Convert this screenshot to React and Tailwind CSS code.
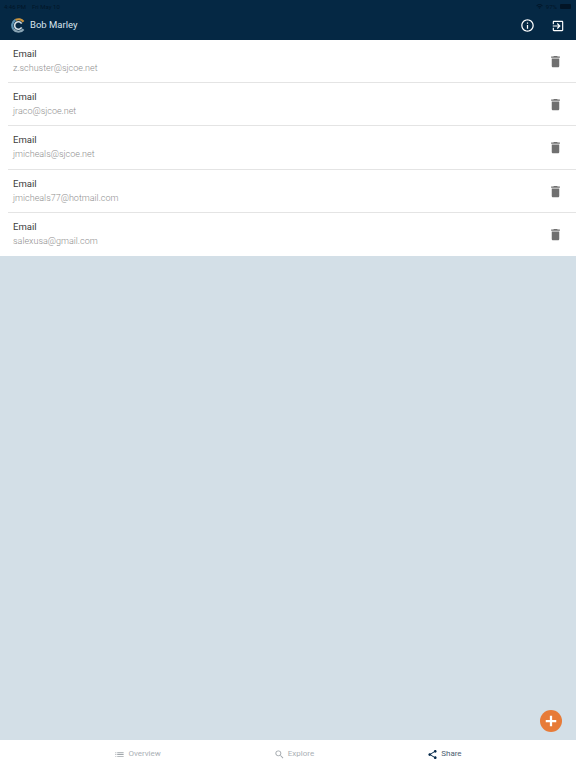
const EMAILS = [
  'z.schuster@sjcoe.net',
  'jraco@sjcoe.net',
  'jmicheals@sjcoe.net',
  'jmicheals77@hotmail.com',
  'salexusa@gmail.com',
];

// Material style glyphs, same set the app uses
const ICONS = {
  trash: 'M6 19c0 1.1.9 2 2 2h8c1.1 0 2-.9 2-2V7H6v12zM19 4h-3.5l-1-1h-5l-1 1H5v2h14V4z',
  info: 'M11 7h2v2h-2zm0 4h2v6h-2zm1-9C6.48 2 2 6.48 2 12s4.48 10 10 10 10-4.48 10-10S17.52 2 12 2zm0 18c-4.41 0-8-3.59-8-8s3.59-8 8-8 8 3.59 8 8-3.59 8-8 8z',
  exit: 'M10.09 15.59L11.5 17l5-5-5-5-1.41 1.41L12.67 11H3v2h9.67l-2.58 2.59zM19 3H5c-1.11 0-2 .9-2 2v4h2V5h14v14H5v-4H3v4c0 1.1.89 2 2 2h14c1.1 0 2-.9 2-2V5c0-1.1-.9-2-2-2z',
  list: 'M3 13h2v-2H3v2zm0 4h2v-2H3v2zm0-8h2V7H3v2zm4 4h14v-2H7v2zm0 4h14v-2H7v2zM7 7v2h14V7H7z',
  search: 'M15.5 14h-.79l-.28-.27C15.41 12.59 16 11.11 16 9.5 16 5.91 13.09 3 9.5 3S3 5.91 3 9.5 5.91 16 9.5 16c1.61 0 3.09-.59 4.23-1.57l.27.28v.79l5 4.99L20.49 19l-4.99-5zm-6 0C7.01 14 5 11.99 5 9.5S7.01 5 9.5 5 14 7.01 14 9.5 11.99 14 9.5 14z',
  share: 'M18 16.08c-.76 0-1.44.3-1.96.77L8.91 12.7c.05-.23.09-.46.09-.7s-.04-.47-.09-.7l7.05-4.11c.54.5 1.25.81 2.04.81 1.66 0 3-1.34 3-3s-1.34-3-3-3-3 1.34-3 3c0 .24.04.47.09.7L8.04 9.81C7.5 9.31 6.79 9 6 9c-1.66 0-3 1.34-3 3s1.34 3 3 3c.79 0 1.5-.31 2.04-.81l7.12 4.16c-.05.21-.08.43-.08.65 0 1.61 1.31 2.92 2.92 2.92s2.92-1.31 2.92-2.92-1.31-2.92-2.92-2.92z',
  plus: 'M19 13.5h-5.500V19h-3v-5.500H5v-3h5.500V5h3v5.500H19v3z',
  wifi: 'M1 9l2 2c5-5 13-5 18 0l2-2C17 3 7 3 1 9zm8 8l3 3 3-3c-1.6-1.6-4.4-1.6-6 0zm-4-4l2 2c2.8-2.8 7.2-2.8 10 0l2-2c-3.9-3.9-10.100-3.900-14 0z',
};

function Icon({ name, className }) {
  return (
    <svg className={className} viewBox="0 0 24 24" fill="currentColor">
      <path d={ICONS[name]} />
    </svg>
  );
}

function Logo() {
  return (
    <svg className="w-[15px] h-[15px]" viewBox="0 0 24 24" fill="none" strokeWidth="3.500">
      <path d="M20 6A10 10 0 0 0 7 3.300" stroke="#c9933f" />
      <path d="M7 3.300A10 10 0 0 0 4 18" stroke="#5f93b3" />
      <path d="M4 18a10 10 0 0 0 16 0" stroke="#8aa5b5" />
      <path d="M17 9a6 6 0 1 0 0 6" stroke="#d5dfe6" strokeWidth="2.500" />
    </svg>
  );
}

function TabItem({ icon, label, active }) {
  return (
    <div className={`flex items-center gap-[3px] text-[8px] ${active ? 'text-[#4a5d70]' : 'text-[#aab0b5]'}`}>
      <Icon name={icon} className={`w-[11px] h-[11px] ${active ? 'text-[#05294a]' : 'text-[#a0a6ab]'}`} />
      <span>{label}</span>
    </div>
  );
}

export default function App() {
  return (
    <div className="font-['Roboto','Liberation_Sans',sans-serif] w-[576px] h-[768px] flex flex-col bg-[#d3dfe7] overflow-hidden">
      {/* Header with status bar */}
      <header className="h-10 bg-[#052844] text-[#d9e4ec] flex flex-col shrink-0">
        <div className="h-[12px] flex items-center justify-between pl-[4px] pr-[5px] text-[6px] text-[#021526]">
          <span className="flex gap-[6px]">
            <span>4:46 PM</span>
            <span>Fri May 10</span>
          </span>
          <span className="flex items-center gap-[3px]">
            <Icon name="wifi" className="w-[7px] h-[7px]" />
            <span>97%</span>
            <span className="w-[11px] h-[5px] rounded-[1px] bg-[#021526]" />
          </span>
        </div>
        <div className="flex-1 flex items-center justify-between pl-[11px] pr-[11px] pb-[1px]">
          <div className="flex items-center gap-[4px]">
            <Logo />
            <span className="text-[9.5px]">Bob Marley</span>
          </div>
          <div className="flex items-center gap-[16px]">
            <Icon name="info" className="w-[15px] h-[15px] text-white" />
            <Icon name="exit" className="w-[14px] h-[14px] text-white" />
          </div>
        </div>
      </header>

      {/* Email list */}
      <ul className="bg-white shrink-0">
        {EMAILS.map((email, i) => (
          <li key={email} className="pl-2">
            <div className={`h-[43.2px] pl-[5px] pr-[13px] flex items-center justify-between ${i < EMAILS.length - 1 ? 'border-b border-[#e4e4e4]' : ''}`}>
              <div>
                <div className="text-[9.5px] leading-[14px] text-[#3c3c3c]">Email</div>
                <div className="text-[9px] font-light leading-[14px] text-[#8f8f8f]">{email}</div>
              </div>
              <Icon name="trash" className="w-[15px] h-[15px] text-[#707070] mt-[1px]" />
            </div>
          </li>
        ))}
      </ul>

      {/* Content area, FAB sits over it */}
      <main className="flex-1 relative">
        <button className="absolute right-[14px] bottom-[8px] w-[22px] h-[22px] rounded-full bg-[#e77b38] flex items-center justify-center">
          <Icon name="plus" className="w-[18px] h-[18px] text-white" />
        </button>
      </main>

      {/* Tabs */}
      <nav className="h-7 bg-white flex justify-center gap-[113px] shrink-0">
        <TabItem icon="list" label="Overview" />
        <TabItem icon="search" label="Explore" />
        <TabItem icon="share" label="Share" active />
      </nav>
    </div>
  );
}
